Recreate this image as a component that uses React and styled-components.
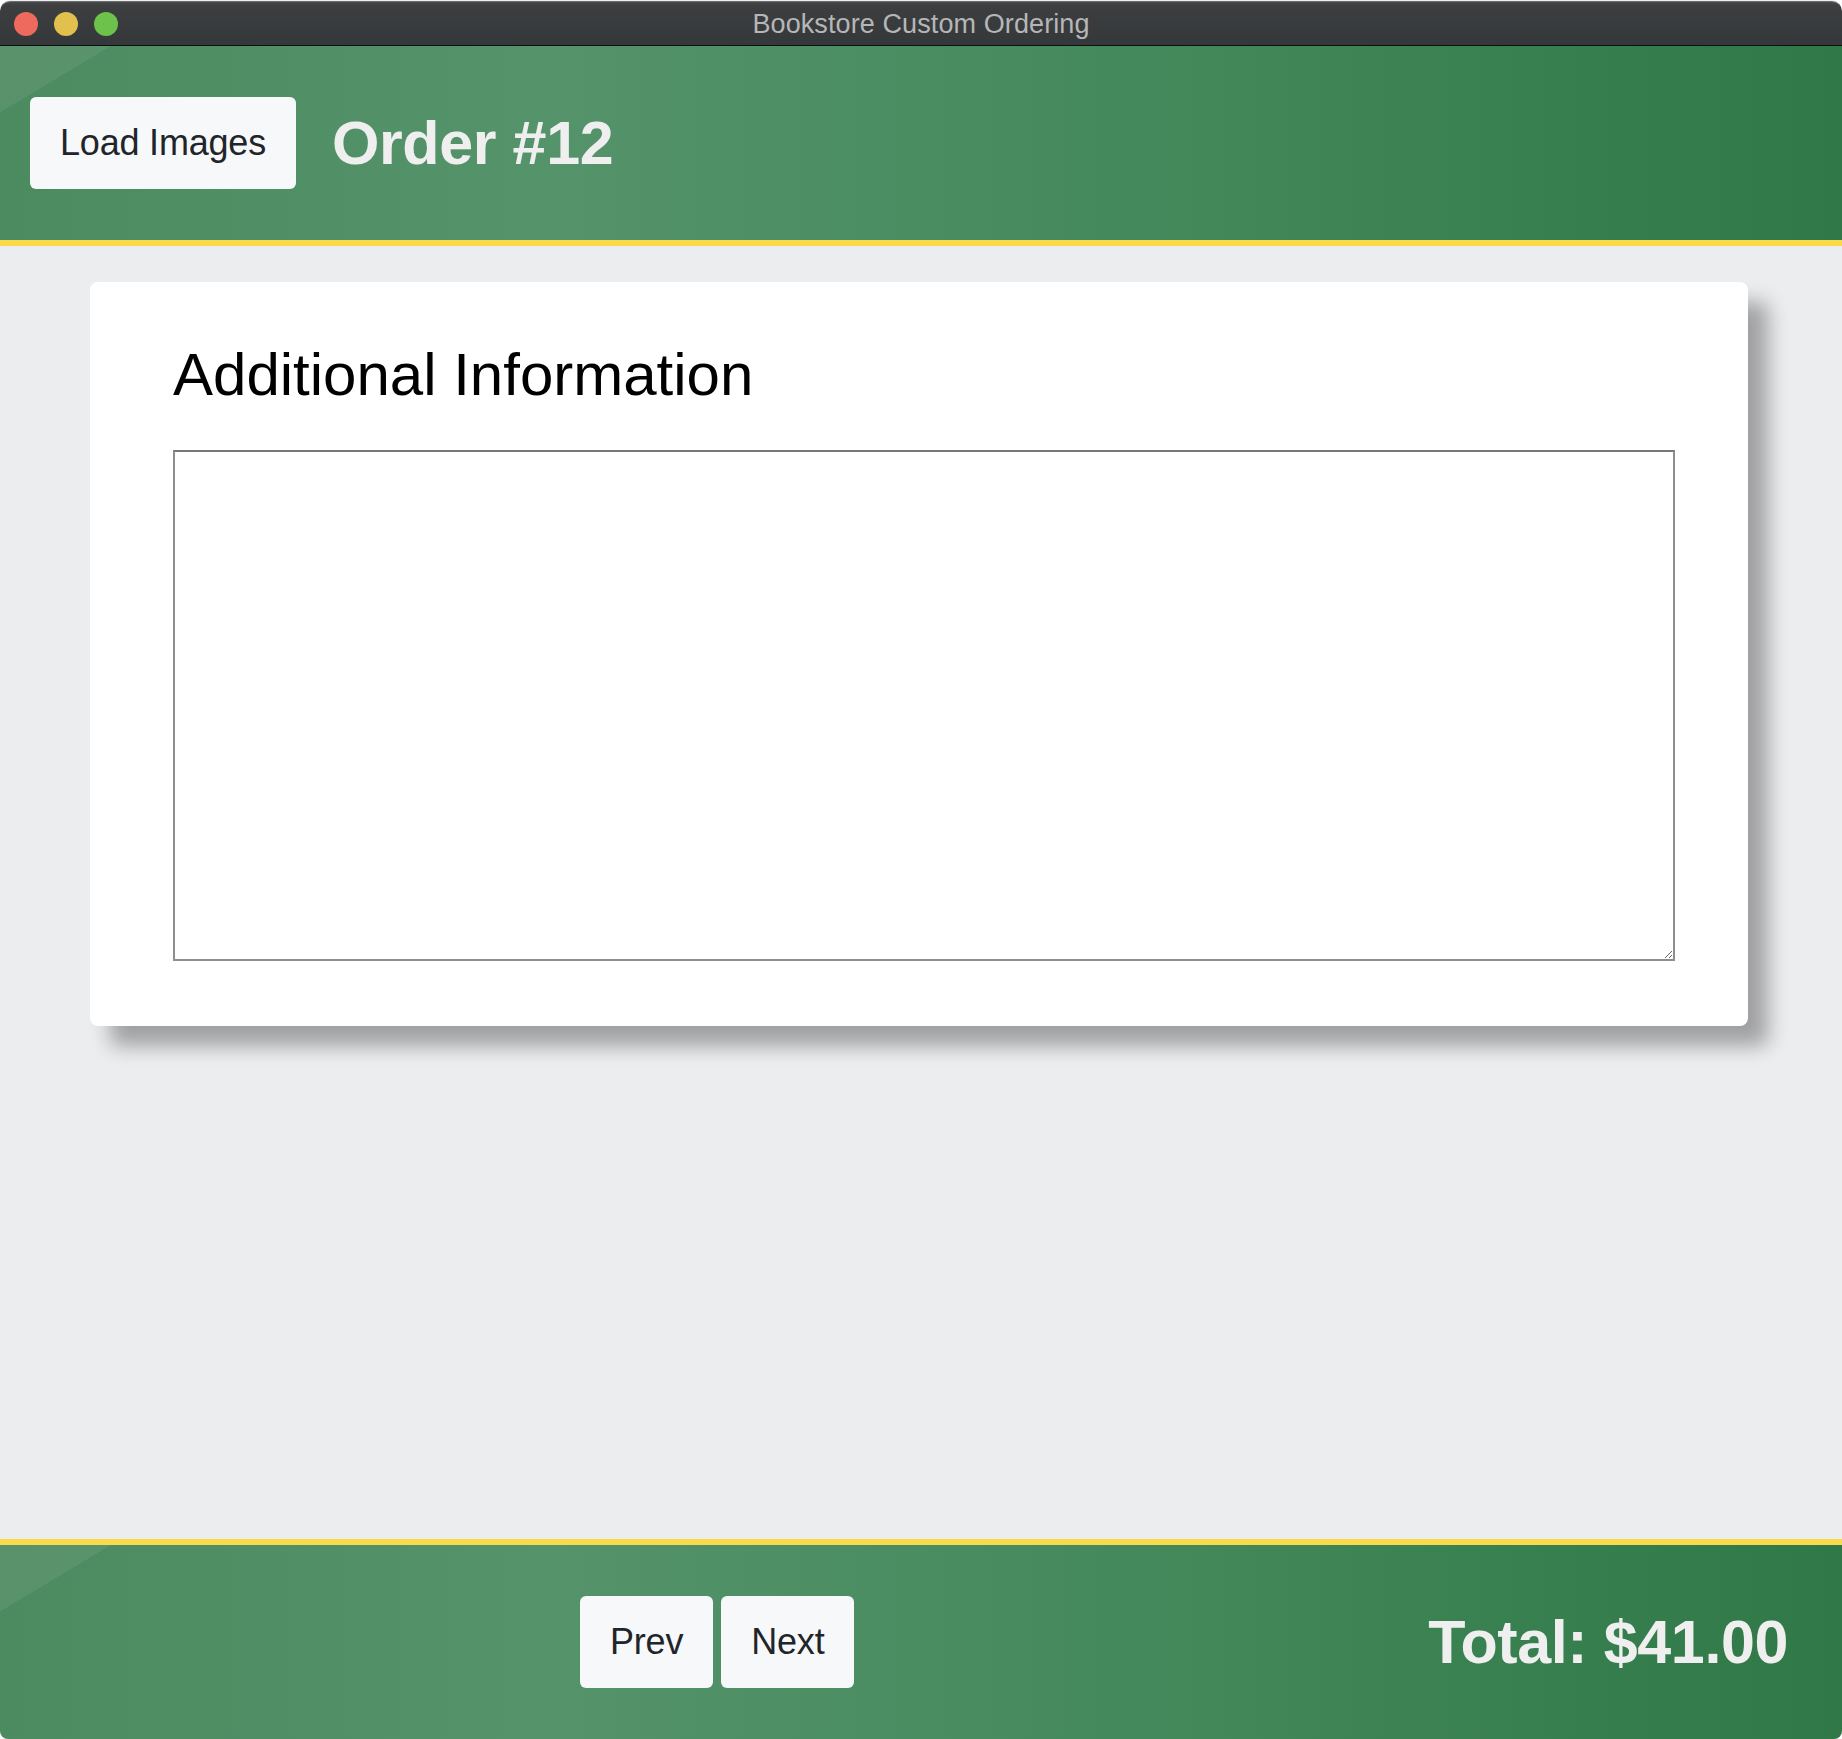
import React, { useState } from "react";
import styled, { createGlobalStyle } from "styled-components";

const GlobalStyle = createGlobalStyle`
  html, body {
    margin: 0;
    padding: 0;
    background: #ffffff;
  }
  body {
    font-family: "Liberation Sans", Arial, Helvetica, sans-serif;
  }
  * {
    box-sizing: border-box;
  }
`;

const FONT = `"Liberation Sans", Arial, Helvetica, sans-serif`;

// shared green band used by the header and footer
const greenBand = `
  background:
    linear-gradient(149deg, rgba(255, 255, 255, 0.07) 57px, rgba(255, 255, 255, 0) 57px),
    linear-gradient(to right, #4c8a5f 0%, #55936b 30%, #428859 65%, #307847 100%);
`;

export default function App() {
  // text typed in the additional information box
  const [notes, setNotes] = useState("");

  return (
    <>
      <GlobalStyle />
      <Window>
        {/* window chrome */}
        <TitleBar>
          <Lights>
            <Light color="#ee6a5f" />
            <Light color="#e2c04d" />
            <Light color="#6cc24a" />
          </Lights>
          <WindowTitle>Bookstore Custom Ordering</WindowTitle>
        </TitleBar>

        {/* top bar */}
        <Header>
          <LightButton>Load Images</LightButton>
          <BigTitle>Order #12</BigTitle>
        </Header>

        {/* main content */}
        <Main>
          <Card>
            <CardHeading>Additional Information</CardHeading>
            <Notes value={notes} onChange={(e) => setNotes(e.target.value)} />
          </Card>
        </Main>

        {/* bottom bar */}
        <Footer>
          <Pager>
            <LightButton>Prev</LightButton>
            <LightButton>Next</LightButton>
          </Pager>
          <BigTitle>Total: $41.00</BigTitle>
        </Footer>
      </Window>
    </>
  );
}

const Window = styled.div`
  width: 1842px;
  height: 1739px;
  padding-top: 1px;
  display: flex;
  flex-direction: column;
  background: #ecedef;
  border-radius: 10px 10px 8px 8px;
  overflow: hidden;
  font-family: ${FONT};
`;

const TitleBar = styled.div`
  position: relative;
  height: 45px;
  flex: none;
  display: flex;
  align-items: center;
  justify-content: center;
  background: linear-gradient(to bottom, #46484a 0%, #3c3e40 8%, #35383a 100%);
  border-top: 1px solid #6b6d6f;
  border-bottom: 1px solid #0e0f10;
  border-radius: 10px 10px 0 0;
`;

const Lights = styled.div`
  position: absolute;
  left: 14px;
  top: 10px;
  display: flex;
  gap: 16px;
`;

const Light = styled.span`
  width: 24px;
  height: 24px;
  border-radius: 50%;
  background: ${(p) => p.color};
`;

const WindowTitle = styled.div`
  font-size: 27px;
  color: #b5b6b7;
  letter-spacing: 0.1px;
  margin-top: 1px;
`;

const Header = styled.div`
  height: 200px;
  flex: none;
  display: flex;
  align-items: center;
  gap: 36px;
  padding-left: 30px;
  ${greenBand}
  border-bottom: 6px solid #f8da4a;
`;

const LightButton = styled.button`
  height: 92px;
  padding: 0 30px;
  border: none;
  border-radius: 6px;
  background: #f6f8fa;
  color: #212529;
  font-family: ${FONT};
  font-size: 36px;
  letter-spacing: -0.2px;
  cursor: pointer;
`;

const BigTitle = styled.div`
  font-size: 61px;
  font-weight: bold;
  letter-spacing: -0.4px;
  color: #efefef;
`;

const Main = styled.div`
  flex: 1;
  padding: 36px 94px 0 90px;
`;

const Card = styled.div`
  background: #ffffff;
  border-radius: 8px;
  padding: 58px 73px 65px 83px;
  box-shadow: 20px 20px 20px rgba(0, 0, 0, 0.32);
`;

const CardHeading = styled.h2`
  margin: 0 0 39px;
  font-size: 60px;
  font-weight: normal;
  letter-spacing: 0;
  line-height: 1.18;
  color: #000000;
`;

const Notes = styled.textarea`
  display: block;
  width: 100%;
  height: 511px;
  border: 2px solid #8e8e8e;
  border-top-color: #787878;
  border-radius: 0;
  padding: 8px;
  font-family: ${FONT};
  font-size: 28px;
  resize: both;
  outline: none;
`;

const Footer = styled.div`
  height: 200px;
  flex: none;
  display: flex;
  align-items: center;
  padding: 0 54px 0 580px;
  ${greenBand}
  border-top: 6px solid #f8da4a;
`;

const Pager = styled.div`
  display: flex;
  gap: 8px;
  margin-right: auto;
`;
